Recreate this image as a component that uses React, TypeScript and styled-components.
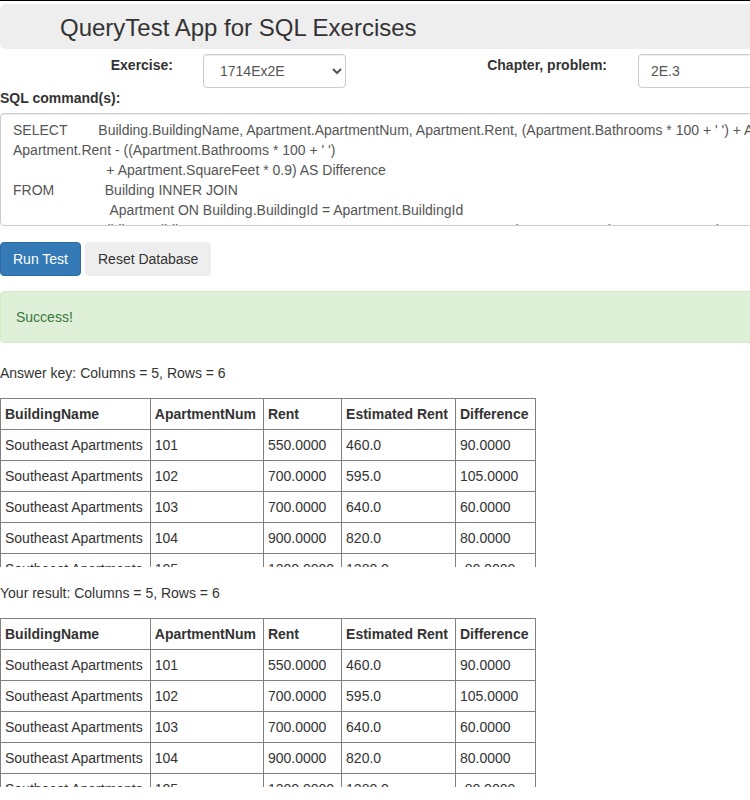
import React from "react";
import styled, { createGlobalStyle } from "styled-components";

const Global = createGlobalStyle`
  html, body { margin: 0; padding: 0; overflow: hidden; background: #fff; }
  body {
    font-family: "Liberation Sans", Arial, sans-serif;
    font-size: 14px;
    line-height: 20px;
    color: #333;
  }
  * { box-sizing: border-box; }
`;

const Page = styled.div`
  width: 1000px;
  display: flex;
  flex-direction: column;
`;

const TopRule = styled.div`
  height: 1px;
  background: #000;
  margin-bottom: 3px;
`;

const Header = styled.div`
  background: #eee;
  border-radius: 6px;
  height: 45px;
  padding: 11px 60px 0;
`;

const Title = styled.h1`
  margin: 0;
  font-size: 24px;
  line-height: 26px;
  font-weight: 400;
  color: #333;
`;

const FormRow = styled.div`
  display: grid;
  grid-template-columns: 188px 170px 264px 1fr;
  align-items: start;
  margin-top: 5px;
`;

const FieldLabel = styled.label`
  font-weight: 700;
  text-align: right;
  padding-right: 15px;
  padding-top: 1px;
  line-height: 20px;
`;

const FieldCell = styled.div`
  padding-left: ${(p: { $pad: number }) => p.$pad}px;
`;

const Select = styled.select`
  width: 143px;
  height: 34px;
  padding: 6px 12px;
  font-family: "Liberation Sans", Arial, sans-serif;
  font-size: 14px;
  color: #555;
  background: #fff;
  border: 1px solid #ccc;
  border-radius: 4px;
  box-shadow: inset 0 1px 1px rgba(0, 0, 0, 0.075);
`;

const Input = styled.input`
  width: 100%;
  height: 34px;
  padding: 6px 12px;
  font-family: "Liberation Sans", Arial, sans-serif;
  font-size: 14px;
  color: #555;
  background: #fff;
  border: 1px solid #ccc;
  border-radius: 4px;
  box-shadow: inset 0 1px 1px rgba(0, 0, 0, 0.075);
`;

const BlockLabel = styled.label`
  display: block;
  font-weight: 700;
  line-height: 20px;
  margin-bottom: 5px;
`;

const SqlArea = styled.textarea`
  display: block;
  width: 100%;
  height: 113px;
  padding: 6px 12px;
  font-family: "Liberation Sans", Arial, sans-serif;
  font-size: 14px;
  line-height: 20px;
  color: #555;
  background: #fff;
  border: 1px solid #ccc;
  border-radius: 4px;
  box-shadow: inset 0 1px 1px rgba(0, 0, 0, 0.075);
  resize: none;
  overflow: hidden;
  white-space: pre;
`;

const ButtonRow = styled.div`
  display: flex;
  gap: 4px;
  margin-top: 16px;
`;

const Button = styled.button<{ $primary?: boolean }>`
  height: 34px;
  padding: 6px 12px;
  font-family: "Liberation Sans", Arial, sans-serif;
  font-size: 14px;
  line-height: 20px;
  border-radius: 4px;
  border: 1px solid ${(p) => (p.$primary ? "#2e6da4" : "#eee")};
  background: ${(p) => (p.$primary ? "#337ab7" : "#eee")};
  color: ${(p) => (p.$primary ? "#fff" : "#333")};
`;

const Alert = styled.div`
  margin-top: 15px;
  margin-bottom: 20px;
  padding: 15px;
  border: 1px solid #d6e9c6;
  border-radius: 4px;
  background: #dff0d8;
  color: #3c763d;
`;

const Caption = styled.p<{ $top?: number }>`
  margin: ${(p) => p.$top ?? 0}px 0 0;
  line-height: 20px;
`;

const TableWrap = styled.div`
  margin-top: 15px;
  height: 169px;
  overflow: hidden;
`;

const Table = styled.table`
  border-collapse: collapse;
  font-size: 14px;
  color: #333;
`;

const Th = styled.th`
  border: 1px solid #808080;
  padding: 5px 7px 5px 4px;
  text-align: left;
  font-weight: 700;
  line-height: 20px;
  white-space: nowrap;
`;

const Td = styled.td`
  border: 1px solid #808080;
  padding: 5px 7px 5px 4px;
  line-height: 20px;
  white-space: nowrap;
`;

const sql = [
  "SELECT        Building.BuildingName, Apartment.ApartmentNum, Apartment.Rent, (Apartment.Bathrooms * 100 + ' ') + Apartment.SquareFeet * 0.9 AS 'Estimated Rent',",
  "Apartment.Rent - ((Apartment.Bathrooms * 100 + ' ')",
  "                        + Apartment.SquareFeet * 0.9) AS Difference",
  "FROM             Building INNER JOIN",
  "                         Apartment ON Building.BuildingId = Apartment.BuildingId",
  "GROUP BY Building.BuildingName, Apartment.ApartmentNum, Apartment.Rent, (Apartment.Bathrooms * 100 + ' ') + Apartment.SquareFeet * 0.9",
].join("\n");

const headers = ["BuildingName", "ApartmentNum", "Rent", "Estimated Rent", "Difference"];
const rows = [
  ["Southeast Apartments", "101", "550.0000", "460.0", "90.0000"],
  ["Southeast Apartments", "102", "700.0000", "595.0", "105.0000"],
  ["Southeast Apartments", "103", "700.0000", "640.0", "60.0000"],
  ["Southeast Apartments", "104", "900.0000", "820.0", "80.0000"],
  ["Southeast Apartments", "105", "1200.0000", "1280.0", "-80.0000"],
  ["Southeast Apartments", "106", "1300.0000", "1330.0", "-30.0000"],
];

function ResultTable() {
  return (
    <TableWrap>
      <Table>
        <thead>
          <tr>
            {headers.map((h) => (
              <Th key={h}>{h}</Th>
            ))}
          </tr>
        </thead>
        <tbody>
          {rows.map((r) => (
            <tr key={r[1]}>
              {r.map((c, i) => (
                <Td key={i}>{c}</Td>
              ))}
            </tr>
          ))}
        </tbody>
      </Table>
    </TableWrap>
  );
}

export default function App() {
  return (
    <>
      <Global />
      <Page>
        <TopRule />
        <Header>
          <Title>QueryTest App for SQL Exercises</Title>
        </Header>
        <FormRow>
          <FieldLabel>Exercise:</FieldLabel>
          <FieldCell $pad={15}>
            <Select defaultValue="1714Ex2E">
              <option value="1714Ex2E">1714Ex2E</option>
            </Select>
          </FieldCell>
          <FieldLabel>Chapter, problem:</FieldLabel>
          <FieldCell $pad={16}>
            <Input defaultValue="2E.3" />
          </FieldCell>
        </FormRow>
        <BlockLabel>SQL command(s):</BlockLabel>
        <SqlArea defaultValue={sql} wrap="off" spellCheck={false} />
        <ButtonRow>
          <Button $primary>Run Test</Button>
          <Button>Reset Database</Button>
        </ButtonRow>
        <Alert>Success!</Alert>
        <Caption>Answer key: Columns = 5, Rows = 6</Caption>
        <ResultTable />
        <Caption $top={16}>Your result: Columns = 5, Rows = 6</Caption>
        <ResultTable />
      </Page>
    </>
  );
}
